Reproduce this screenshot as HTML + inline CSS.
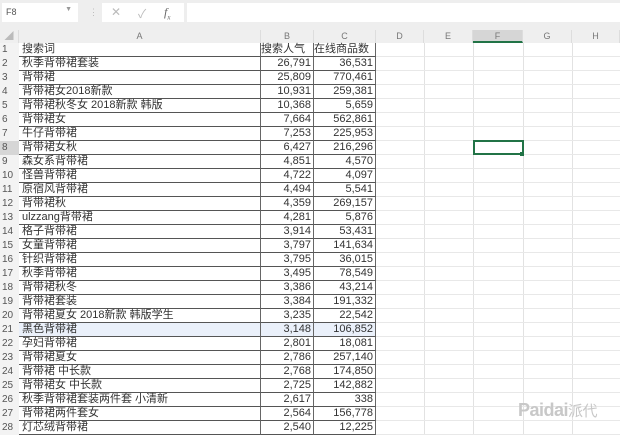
<!DOCTYPE html>
<html><head><meta charset="utf-8"><style>
*{margin:0;padding:0;box-sizing:border-box}
body{width:620px;height:435px;overflow:hidden;background:#fff;font-family:"Liberation Sans","Noto Sans CJK SC",sans-serif;font-size:11px;color:#333;position:relative}
.top{position:absolute;left:0;top:0;width:620px;height:30px;background:#eeeeee}
.nb{position:absolute;left:2px;top:3px;width:76px;height:19px;background:#fff;font-size:9px;padding:4px 4px;color:#555}
.nb span{position:absolute;right:6px;top:3px;color:#999;font-size:7px}
.fx{position:absolute;left:102px;top:3px;width:82px;height:19px;background:#fff;color:#bbb}
.fi{position:absolute;left:187px;top:3px;width:433px;height:19px;background:#fff}
.hdr{position:absolute;top:30px;height:13px;background:#efefef;border-right:1px solid #ddd;text-align:center;font-size:9px;color:#777;line-height:13px}
.rh{position:absolute;left:0;width:19px;height:14px;background:#f3f3f3;font-size:10px;color:#555;line-height:14px;padding-left:2px}
.c{position:absolute;height:14px;line-height:13px;white-space:nowrap;font-size:11px;color:#333;border-bottom:1px solid #555;border-right:1px solid #666}
.g{position:absolute;top:43px;height:392px;width:1px;background:#e2e2e2}
.h{position:absolute;left:376px;width:244px;height:1px;background:#e8e8e8}
.r{text-align:right;padding-right:2px}
</style></head><body>
<div class="top">
<div class="nb">F8<span>▼</span></div>
<div style="position:absolute;left:89px;top:7px;color:#bbb;font-size:9px">⋮</div>
<div class="fx"><span style="position:absolute;left:9px;top:2px;font-size:12px">✕</span><span style="position:absolute;left:36px;top:2px;font-size:12px">✓</span><span style="position:absolute;left:62px;top:2px;font-style:italic;font-family:'Liberation Serif',serif;color:#666;font-size:12px">f<sub style="font-size:7px">x</sub></span></div>
<div class="fi"></div>
</div>
<div class="hdr" style="left:0;width:19px;color:#bbb">◢</div>
<div class="hdr" style="left:19px;width:242px">A</div>
<div class="hdr" style="left:261px;width:53px">B</div>
<div class="hdr" style="left:314px;width:62px">C</div>
<div class="hdr" style="left:376px;width:48px">D</div>
<div class="hdr" style="left:424px;width:49px">E</div>
<div class="hdr" style="left:473px;width:50px;background:#d6d6d6;border-bottom:2px solid #217346">F</div>
<div class="hdr" style="left:523px;width:49px">G</div>
<div class="hdr" style="left:572px;width:48px">H</div>
<div class="g" style="left:424px"></div><div class="g" style="left:473px"></div><div class="g" style="left:523px"></div><div class="g" style="left:572px"></div>
<div id="rows"></div>
<div style="position:absolute;left:473px;top:140px;width:51px;height:15px;border:2px solid #217346"></div>
<div style="position:absolute;left:520px;top:152px;width:4px;height:4px;background:#217346"></div>
<div style="position:absolute;left:518px;top:400px;font-size:18px;font-weight:bold;color:#c8c8c8;letter-spacing:-0.5px">Paidai<span style="font-weight:normal;font-size:15px">派代</span></div>
<script>
var d=[["搜索词","搜索人气","在线商品数"],["秋季背带裙套装","26,791","36,531"],["背带裙","25,809","770,461"],["背带裙女2018新款","10,931","259,381"],["背带裙秋冬女 2018新款 韩版","10,368","5,659"],["背带裙女","7,664","562,861"],["牛仔背带裙","7,253","225,953"],["背带裙女秋","6,427","216,296"],["森女系背带裙","4,851","4,570"],["怪兽背带裙","4,722","4,097"],["原宿风背带裙","4,494","5,541"],["背带裙秋","4,359","269,157"],["ulzzang背带裙","4,281","5,876"],["格子背带裙","3,914","53,431"],["女童背带裙","3,797","141,634"],["针织背带裙","3,795","36,015"],["秋季背带裙","3,495","78,549"],["背带裙秋冬","3,386","43,214"],["背带裙套装","3,384","191,332"],["背带裙夏女 2018新款 韩版学生","3,235","22,542"],["黑色背带裙","3,148","106,852"],["孕妇背带裙","2,801","18,081"],["背带裙夏女","2,786","257,140"],["背带裙 中长款","2,768","174,850"],["背带裙女 中长款","2,725","142,882"],["秋季背带裙套装两件套 小清新","2,617","338"],["背带裙两件套女","2,564","156,778"],["灯芯绒背带裙","2,540","12,225"]];
var h="";
for(var i=0;i<d.length;i++){var t=43+i*14;var bg=i==20?"background:#eaf0fa;":"";
h+='<div class="rh" style="top:'+t+'px;'+(i==7?'background:#d6d6d6;':'')+'">'+(i+1)+'</div>';
h+='<div class="c" style="left:19px;width:242px;top:'+t+'px;padding-left:3px;'+bg+'">'+d[i][0]+'</div>';
h+='<div class="c'+(i?' r':'')+'" style="left:261px;width:53px;top:'+t+'px;'+bg+'">'+d[i][1]+'</div>';
h+='<div class="c'+(i?' r':'')+'" style="left:314px;width:62px;top:'+t+'px;'+bg+'">'+d[i][2]+'</div>';
h+='<div class="h" style="top:'+(t+13)+'px"></div>';}
document.getElementById("rows").innerHTML=h;
</script>
</body></html>
